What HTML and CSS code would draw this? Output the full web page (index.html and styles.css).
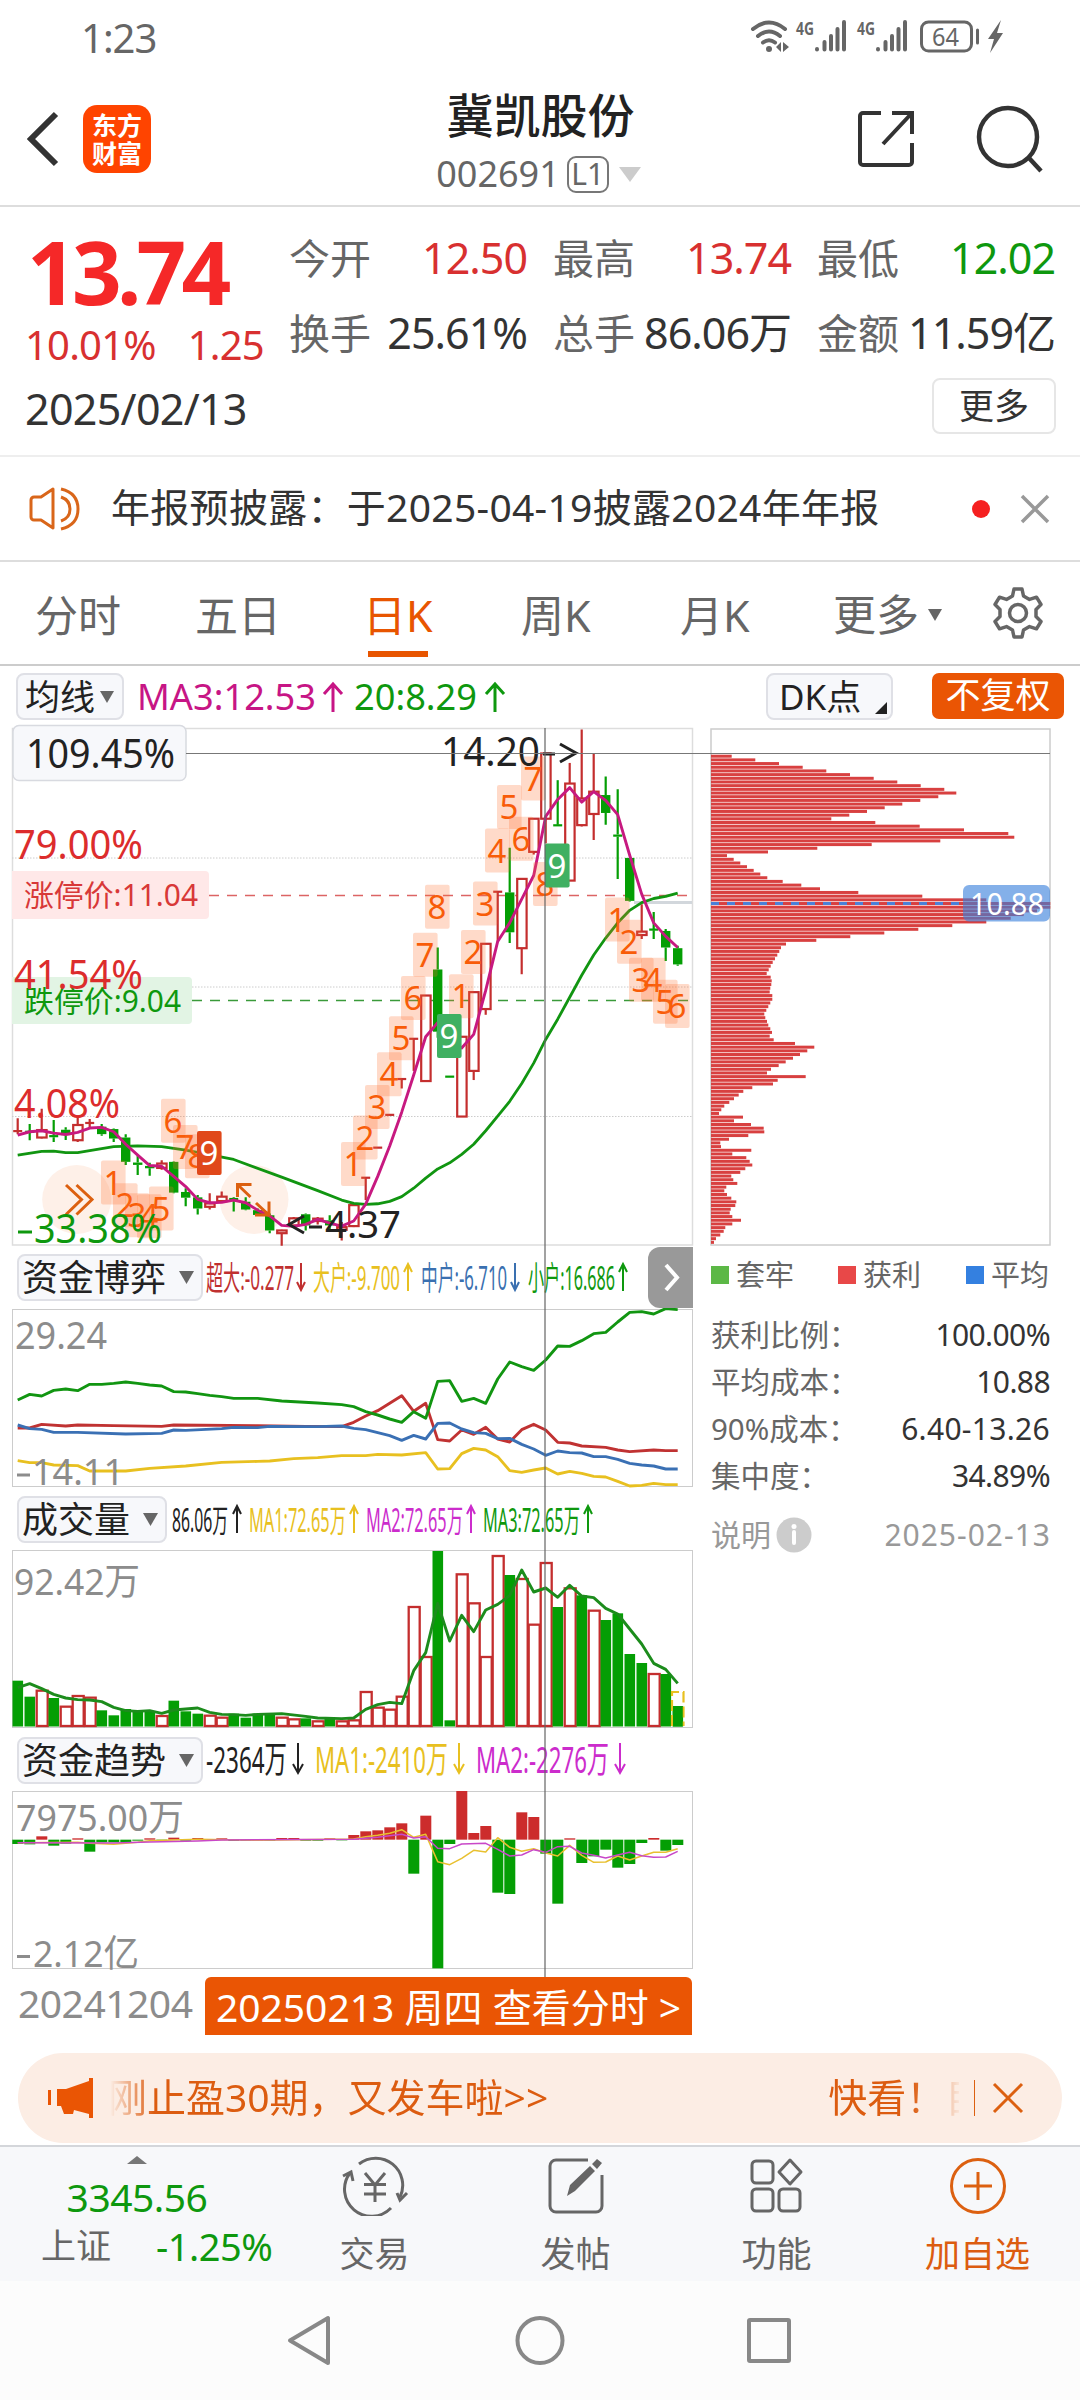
FILE: index.html
```html
<!DOCTYPE html>
<html lang="zh-CN">
<head>
<meta charset="utf-8">
<title>冀凯股份 002691</title>
<link rel="stylesheet" href="styles.css">
</head>
<body>
<div class="status">
  <span class="clock">1:23</span>
  <svg class="status-icons" width="256" height="40" viewBox="750 17 256 40">
    <g fill="none" stroke="#666" stroke-width="4" stroke-linecap="round">
      <path d="M753 29Q769 16 785 29M758 36Q769 27 780 36M763 42.500Q769 38 775 42.500"/>
      <path d="M817 49v.5M824.500 42v7.500M831 36v13.500M837.500 29v20.500M844 22v27.500"/>
      <path d="M878 49v.5M885.500 42v7.500M892 36v13.500M898.500 29v20.500M905 22v27.500"/>
    </g>
    <circle cx="769" cy="49" r="3" fill="#666"/>
    <path d="M776 47l5-5v10zM783 42l6 5-6 5z" fill="#666"/>
    <text x="796" y="35" font-size="18" font-weight="700" textLength="18" lengthAdjust="spacingAndGlyphs" fill="#666">4G</text>
    <text x="857" y="35" font-size="18" font-weight="700" textLength="18" lengthAdjust="spacingAndGlyphs" fill="#666">4G</text>
    <rect x="921.500" y="22" width="50" height="29" rx="7" fill="none" stroke="#666" stroke-width="3"/>
    <text x="932" y="45.500" font-size="25" textLength="27" lengthAdjust="spacingAndGlyphs" fill="#666">64</text>
    <path d="M977.500 30v13" stroke="#666" stroke-width="3" stroke-linecap="round"/>
    <path d="M1001 20l-13 19h6l-4 14 13-20h-6z" fill="#666"/>
  </svg>
</div>

<header class="header">
  <svg class="back" width="34" height="56" viewBox="0 0 34 56"><path d="M29 3L4 28l25 25" fill="none" stroke="#333" stroke-width="6"/></svg>
  <div class="logo"><span>东方</span><span>财富</span></div>
  <div class="titles">
    <div class="name">冀凯股份</div>
    <div class="code">002691<span class="level">L1</span><svg width="24" height="15" viewBox="0 0 24 15"><path d="M1 0h22L12 15z" fill="#ccc"/></svg></div>
  </div>
  <svg class="share" width="60" height="60" viewBox="0 0 60 60"><g fill="none" stroke="#333" stroke-width="4"><path d="M25 4H7a3 3 0 0 0-3 3v46a3 3 0 0 0 3 3h46a3 3 0 0 0 3-3V34"/><path d="M36 4h20v21M55 5L27 35"/></g></svg>
  <svg class="search" width="72" height="72" viewBox="0 0 72 72"><g fill="none" stroke="#333" stroke-width="4.500"><circle cx="33" cy="34" r="29"/><path d="M54 55l12 13"/></g></svg>
</header>

<section class="quote">
  <div class="price-block">
    <div class="price">13.74</div>
    <div class="change"><span>10.01%</span><span>1.25</span></div>
  </div>
  <div class="facts">
    <div><label>今开</label><b class="up">12.50</b></div>
    <div><label>最高</label><b class="up">13.74</b></div>
    <div><label>最低</label><b class="down">12.02</b></div>
    <div><label>换手</label><b>25.61%</b></div>
    <div><label>总手</label><b>86.06万</b></div>
    <div><label>金额</label><b>11.59亿</b></div>
  </div>
  <div class="date">2025/02/13</div>
  <div class="more-btn">更多</div>
</section>

<section class="notice">
  <svg width="52" height="46" viewBox="0 0 52 46"><g fill="none" stroke="#d9661a" stroke-width="3"><path d="M24 3L12 11H5a3 3 0 0 0-3 3v17a3 3 0 0 0 3 3h7l12 8zM32 11q9 3 9 12t-9 12M32 3q17 4 17 20T32 43" stroke-linejoin="round"/></g></svg>
  <span class="notice-text">年报预披露：于2025-04-19披露2024年年报</span>
  <i class="dot"></i>
  <svg class="close" width="32" height="32" viewBox="0 0 32 32"><path d="M3 3l26 26M29 3L3 29" stroke="#999" stroke-width="3.500"/></svg>
</section>

<nav class="tabs">
  <span class="t1">分时</span><span class="t2">五日</span><span class="t3 active">日K</span><span class="t4">周K</span><span class="t5">月K</span>
  <span class="t6">更多<svg width="14" height="12" viewBox="0 0 14 12"><path d="M0 0h14L7 12z" fill="#666"/></svg></span>
  <svg class="gear" width="54" height="54" viewBox="0 0 54 54"><g fill="none" stroke="#666" stroke-width="3.500" stroke-linejoin="round"><path d="M23 3h8l1.500 7 6 3.400 7-2.200 4.500 7.300-5 5v7l5 5-4.500 7.300-7-2.200-6 3.400L31 51h-8l-1.500-7-6-3.400-7 2.200L4 35.500l5-5v-7l-5-5 4.500-7.300 7 2.200 6-3.400z"/><circle cx="27" cy="27" r="8.500"/></g></svg>
</nav>

<section class="ma-row">
  <span class="pick">均线<svg width="14" height="12" viewBox="0 0 14 12"><path d="M0 0h14L7 12z" fill="#666"/></svg></span>
  <svg class="ma-text" width="380" height="46" viewBox="135 674 380 46">
    <text x="137" y="711" font-size="37" textLength="179" lengthAdjust="spacingAndGlyphs" fill="#c71585">MA3:12.53</text>
    <path d="M333 713v-28M324 695l9-10 9 10" fill="none" stroke="#c71585" stroke-width="3"/>
    <text x="354" y="711" font-size="37" textLength="123" lengthAdjust="spacingAndGlyphs" fill="#0e980e">20:8.29</text>
    <path d="M495 713v-28M486 695l9-10 9 10" fill="none" stroke="#0e980e" stroke-width="3"/>
  </svg>
  <span class="dk">DK点<svg width="12" height="12" viewBox="0 0 12 12"><path d="M12 0v12H0z" fill="#222"/></svg></span>
  <span class="adjust">不复权</span>
</section>

<main class="charts">
  <div class="left">
    <svg class="panel" width="700" height="530" viewBox="0 0 700 530">
      <rect x="12.500" y="8.500" width="680" height="516.500" fill="#fff" stroke="#ddd" stroke-width="1.500"/>
      <path d="M12 138h680M12 267h680M12 396.500h680" stroke="#ccc" stroke-dasharray="1.500 1.500"/>
      <circle cx="76.700" cy="479.500" r="34.500" fill="#fef0e8"/><circle cx="254" cy="479.500" r="34.500" fill="#fef0e8"/>
      <path d="M209 175.500h479" stroke="#dc6464" stroke-width="1.500" stroke-dasharray="10 8"/>
      <path d="M192 280.500h496" stroke="#3a9a3a" stroke-width="1.500" stroke-dasharray="10 8"/>
      <path d="M634 182.500h58" stroke="#d2d7dc" stroke-width="3"/>
      <g id="candles"></g>
      <g id="averages"></g>
      <path d="M66 465l15.500 14.500L66 494.500M76.500 465L92 479.500l-15.500 15M237.500 477v-12.500h14M238 465l12.500 12M269 481.500v13.500h-14M256 483l13 12" fill="none" stroke="#dc6010" stroke-width="3"/>
      <g id="tags"></g>
      <path d="M12 151h193a4 4 0 0 1 4 4v40a4 4 0 0 1-4 4H12z" fill="#ffe8e8"/>
      <path d="M12 257h176a4 4 0 0 1 4 4v39a4 4 0 0 1-4 4H12z" fill="#e2f4e4"/>
      <text x="24" y="186" font-size="30" textLength="174" lengthAdjust="spacingAndGlyphs" fill="#d83838">涨停价:11.04</text>
      <text x="24" y="292" font-size="30" textLength="157" lengthAdjust="spacingAndGlyphs" fill="#0e980e">跌停价:9.04</text>
      <g font-size="40">
        <text x="14" y="139" textLength="129" lengthAdjust="spacingAndGlyphs" fill="#dc2c2c">79.00%</text>
        <text x="14" y="269" textLength="129" lengthAdjust="spacingAndGlyphs" fill="#dc2c2c">41.54%</text>
        <text x="14" y="398" textLength="106" lengthAdjust="spacingAndGlyphs" fill="#dc2c2c">4.08%</text>
        <path d="M18 512h14" stroke="#0e980e" stroke-width="3"/>
        <text x="34" y="523" textLength="128" lengthAdjust="spacingAndGlyphs" fill="#0e980e">33.38%</text>
      </g>
      <text x="441" y="46" font-size="40" textLength="99" lengthAdjust="spacingAndGlyphs" fill="#222">14.20</text>
      <path d="M543 34h12M560 24l16 9-16 9" fill="none" stroke="#222" stroke-width="3"/>
      <path d="M304 496l-15 8.500 15 8.500M309 507h13" fill="none" stroke="#222" stroke-width="3"/>
      <text x="325" y="518" font-size="39" textLength="76" lengthAdjust="spacingAndGlyphs" fill="#222">4.37</text>
      <rect x="13" y="5.500" width="173" height="55" rx="6" fill="#f7f8fb" stroke="#d8dae0" stroke-width="1.500"/>
      <text x="26" y="48" font-size="40" textLength="149" lengthAdjust="spacingAndGlyphs" fill="#222">109.45%</text>
    </svg>

    <div class="ind r1">
      <span class="pick wide">资金博弈<svg width="15" height="13" viewBox="0 0 15 13"><path d="M0 0h15L7.500 13z" fill="#666"/></svg></span>
      <svg width="430" height="46" viewBox="205 1254 430 46" font-size="33">
        <text x="206" y="1290" textLength="88" lengthAdjust="spacingAndGlyphs" fill="#c03030">超大:-0.277</text>
        <text x="313" y="1290" textLength="87" lengthAdjust="spacingAndGlyphs" fill="#e8c020">大户:-9.700</text>
        <text x="421" y="1290" textLength="86" lengthAdjust="spacingAndGlyphs" fill="#3a70b0">中户:-6.710</text>
        <text x="528" y="1290" textLength="87" lengthAdjust="spacingAndGlyphs" fill="#0e980e">小户:16.686</text>
        <path d="M301 1263v27M297 1282l4 8 4-8" class="arr" stroke="#c03030"/>
        <path d="M408 1291v-27M404 1272l4-8 4 8" class="arr" stroke="#e8c020"/>
        <path d="M515 1263v27M511 1282l4 8 4-8" class="arr" stroke="#3a70b0"/>
        <path d="M623 1291v-27M619 1272l4-8 4 8" class="arr" stroke="#0e980e"/>
      </svg>
    </div>
    <svg class="panel" width="700" height="178" viewBox="0 0 700 178">
      <rect x="12.500" y=".5" width="680" height="177" fill="none" stroke="#ccc"/>
      <g id="funds"></g>
      <text x="15" y="40" font-size="38" textLength="92" lengthAdjust="spacingAndGlyphs" fill="#8c8c8c">29.24</text>
      <path d="M17 166h13" stroke="#8c8c8c" stroke-width="3"/>
      <text x="32" y="176" font-size="37" textLength="92" lengthAdjust="spacingAndGlyphs" fill="#8c8c8c">14.11</text>
    </svg>

    <div class="ind r2">
      <span class="pick wide">成交量<svg width="15" height="13" viewBox="0 0 15 13"><path d="M0 0h15L7.500 13z" fill="#666"/></svg></span>
      <svg width="430" height="46" viewBox="171 1496 430 46" font-size="32">
        <text x="172" y="1532" textLength="56" lengthAdjust="spacingAndGlyphs" fill="#222">86.06万</text>
        <text x="249" y="1532" textLength="97" lengthAdjust="spacingAndGlyphs" fill="#e8c020">MA1:72.65万</text>
        <text x="366" y="1532" textLength="97" lengthAdjust="spacingAndGlyphs" fill="#cc2ccc">MA2:72.65万</text>
        <text x="483" y="1532" textLength="97" lengthAdjust="spacingAndGlyphs" fill="#0e980e">MA3:72.65万</text>
        <path d="M237 1533v-27M233 1514l4-8 4 8" class="arr" stroke="#222"/>
        <path d="M354 1533v-27M350 1514l4-8 4 8" class="arr" stroke="#e8c020"/>
        <path d="M471 1533v-27M467 1514l4-8 4 8" class="arr" stroke="#cc2ccc"/>
        <path d="M588 1533v-27M584 1514l4-8 4 8" class="arr" stroke="#0e980e"/>
      </svg>
    </div>
    <svg class="panel" width="700" height="178" viewBox="0 0 700 178">
      <rect x="12.500" y=".5" width="680" height="177" fill="none" stroke="#ccc"/>
      <g id="volume"></g>
      <text x="14" y="45" font-size="37" textLength="126" lengthAdjust="spacingAndGlyphs" fill="#8c8c8c">92.42万</text>
    </svg>

    <div class="ind r3">
      <span class="pick wide">资金趋势<svg width="15" height="13" viewBox="0 0 15 13"><path d="M0 0h15L7.500 13z" fill="#666"/></svg></span>
      <svg width="430" height="46" viewBox="205 1737 430 46" font-size="37">
        <text x="206" y="1773" textLength="81" lengthAdjust="spacingAndGlyphs" fill="#222">-2364万</text>
        <text x="315" y="1773" textLength="133" lengthAdjust="spacingAndGlyphs" fill="#e8c020">MA1:-2410万</text>
        <text x="476" y="1773" textLength="133" lengthAdjust="spacingAndGlyphs" fill="#cc2ccc">MA2:-2276万</text>
        <path d="M298 1743v30M293 1764l5 9 5-9" class="arr" stroke="#222"/>
        <path d="M459 1743v30M454 1764l5 9 5-9" class="arr" stroke="#e8c020"/>
        <path d="M620 1743v30M615 1764l5 9 5-9" class="arr" stroke="#cc2ccc"/>
      </svg>
    </div>
    <svg class="panel" width="700" height="178" viewBox="0 0 700 178">
      <rect x="12.500" y=".5" width="680" height="177" fill="none" stroke="#ccc"/>
      <g id="trend"></g>
      <text x="16" y="40" font-size="37" textLength="168" lengthAdjust="spacingAndGlyphs" fill="#8c8c8c">7975.00万</text>
      <path d="M17 165.500h13" stroke="#8c8c8c" stroke-width="3"/>
      <text x="33" y="176" font-size="37" textLength="106" lengthAdjust="spacingAndGlyphs" fill="#8c8c8c">2.12亿</text>
    </svg>

    <div class="dates"><span class="from">20241204</span><span class="goto">20250213 周四 查看分时 &gt;</span></div>
    <div class="next"><svg width="44" height="61" viewBox="0 0 44 61"><path d="M18 18l11 12.500L18 43" fill="none" stroke="#fff" stroke-width="4"/></svg></div>
  </div>

  <aside class="right">
    <svg class="panel" width="370" height="530" viewBox="700 0 370 530">
      <rect x="711" y="9" width="339" height="516" fill="none" stroke="#ccc" stroke-width="1.500"/>
      <g id="chips"></g>
      <path d="M711 183.600h252" stroke="#4a80d8" stroke-width="3" stroke-dasharray="8 8"/>
      <rect x="963" y="165" width="87" height="36.500" rx="6" fill="#3880dc" fill-opacity=".62"/>
      <text x="970" y="195" font-size="31" textLength="74" lengthAdjust="spacingAndGlyphs" fill="#fff">10.88</text>
    </svg>
    <div class="legend"><span class="c1">套牢</span><span class="c2">获利</span><span class="c3">平均</span></div>
    <dl class="stats">
      <dt>获利比例：</dt><dd>100.00%</dd>
      <dt>平均成本：</dt><dd>10.88</dd>
      <dt>90%成本：</dt><dd class="range">6.40-13.26</dd>
      <dt>集中度：</dt><dd>34.89%</dd>
    </dl>
    <div class="explain"><span>说明</span><svg width="36" height="36" viewBox="0 0 36 36"><circle cx="18" cy="18" r="17.500" fill="#ccc"/><path d="M18 15v11" stroke="#fff" stroke-width="4" stroke-linecap="round"/><circle cx="18" cy="9.500" r="2.500" fill="#fff"/></svg><time>2025-02-13</time></div>
  </aside>
  <div class="cross-h"></div>
  <div class="cross-v"></div>
</main>

<section class="ticker">
  <svg width="46" height="42" viewBox="0 0 46 42"><path d="M1 13v15" stroke="#ea5504" stroke-width="4"/><path d="M9 12h9L41 4V1h4v40h-4v-4l-15-4-1 4h-9l-3-8H9z" fill="#ea5504"/></svg>
  <div class="marquee"><span>刚止盈30期，又发车啦&gt;&gt;</span><span class="second">快看！</span><span class="third">目</span></div>
  <i></i>
  <svg width="34" height="34" viewBox="0 0 34 34"><path d="M3 3l28 28M31 3L3 31" stroke="#dc6010" stroke-width="3"/></svg>
</section>

<footer class="toolbar">
  <div class="index">
    <svg width="20" height="8" viewBox="0 0 20 8"><path d="M0 8h20L10 0z" fill="#777"/></svg>
    <div class="level-now">3345.56</div>
    <div class="index-row"><span>上证</span><b>-1.25%</b></div>
  </div>
  <div class="tool">
    <svg width="68" height="60" viewBox="0 0 68 60"><g fill="none" stroke="#666" stroke-width="3"><path d="M18 8A27 27 0 0 1 59 41M50 52A27 27 0 0 1 9 17"/><path d="M2 20l8-4 2 9M66 37l-7 7-3-7"/><path d="M24 17l10 12 10-12M34 29v17M23 28.500h22M23 38h22"/></g></svg>
    <span>交易</span>
  </div>
  <div class="tool">
    <svg width="60" height="60" viewBox="0 0 60 60"><path d="M42 4H10a6 6 0 0 0-6 6v40a6 6 0 0 0 6 6h40a6 6 0 0 0 6-6V19" fill="none" stroke="#666" stroke-width="3"/><path d="M21 40l3-11 20-19 5 5-20 20z M46 8l5-5 5 4-5 6z" fill="#666"/></svg>
    <span>发帖</span>
  </div>
  <div class="tool">
    <svg width="60" height="60" viewBox="0 0 60 60"><g fill="none" stroke="#666" stroke-width="3" stroke-linejoin="round"><rect x="5" y="5" width="21" height="22" rx="4"/><rect x="5" y="33" width="21" height="22" rx="4"/><rect x="32" y="33" width="21" height="22" rx="4"/><path d="M43 4l11 12-11 12-11-12z"/></g></svg>
    <span>功能</span>
  </div>
  <div class="tool add">
    <svg width="60" height="60" viewBox="0 0 60 60"><g fill="none" stroke="#dc6010" stroke-width="3"><circle cx="30" cy="30" r="26.500"/><path d="M30 16v28M16 30h28"/></g></svg>
    <span>加自选</span>
  </div>
</footer>

<div class="sysnav">
  <svg width="1080" height="118" viewBox="0 0 1080 118"><g fill="none" stroke="#888" stroke-width="4" stroke-linejoin="round"><path d="M328 37v45L290 59.500z"/><circle cx="540" cy="59.500" r="22.500"/><rect x="749" y="39" width="40" height="41" rx="1"/></g></svg>
</div>
<script src="charts.js"></script>
</body>
</html>
```
FILE: styles.css
```css
* { box-sizing: border-box; }
body {
  margin: 0;
  width: 1080px;
  height: 2400px;
  overflow: hidden;
  background: #fff;
  color: #333;
  font-family: "Noto Sans", "Noto Sans CJK SC", sans-serif;
  line-height: 1;
}
svg { display: block; flex: none; }
b { font-weight: 400; }
.panel { overflow: visible; }

.status { height: 75px; display: flex; justify-content: space-between; padding: 17px 74px 0 81px; }
.clock { font-size: 40px; line-height: 42px; color: #666; letter-spacing: -1px; }

.header { height: 132px; display: flex; align-items: flex-start; border-bottom: 2px solid #ddd; }
.back { margin: 36px 22px 0 27px; }
.logo {
  width: 68px; height: 68px; margin-top: 30px; padding-top: 6px; border-radius: 14px; background: #ff4400;
  display: flex; flex-direction: column; align-items: center; color: #fff; font-size: 25px; font-weight: 700; line-height: 28px;
}
.titles { flex: 1; margin-top: 16px; padding-left: 74px; display: flex; flex-direction: column; align-items: center; }
.name { font-size: 47px; line-height: 48px; font-weight: 500; color: #222; }
.code { display: flex; align-items: center; height: 36px; margin: 17px 3px 0 0; font-size: 36px; color: #666; }
.level { width: 42px; height: 37px; margin: 0 9px 0 7px; border: 2px solid #777; border-radius: 9px; font-size: 30px; line-height: 31px; text-align: center; }
.share { margin: 34px 0 0; }
.search { margin: 28px 33px 0 59px; }

.quote { height: 250px; padding: 23px 25px 0; display: grid; grid-template-columns: 264px 1fr; grid-template-rows: 140px 56px; row-gap: 8px; border-bottom: 2px solid #eee; }
.price { font-size: 87px; line-height: 82px; padding-left: 2px; font-weight: 700; letter-spacing: -4.800px; color: #f52828; }
.change { display: flex; gap: 32px; margin-top: 11px; font-size: 40px; line-height: 44px; letter-spacing: -.8px; color: #d83030; }
.facts { display: grid; grid-template-columns: repeat(3, 238px); column-gap: 26px; grid-auto-rows: 75px; margin-top: 1px; }
.facts div { display: flex; justify-content: space-between; line-height: 54px; white-space: nowrap; }
.facts label { font-size: 41px; color: #666; }
.facts b { font-size: 43px; letter-spacing: -1px; }
.facts .up { color: #d83030; }
.facts .down { color: #0e980e; }
.date { font-size: 43px; line-height: 62px; letter-spacing: -.7px; }
.more-btn { justify-self: end; width: 124px; height: 56px; margin-right: -1px; border: 2px solid #e6e6e6; border-radius: 8px; text-align: center; font-size: 35px; line-height: 52px; }

.notice { height: 105px; display: flex; align-items: center; padding: 0 29px; border-bottom: 2px solid #ddd; }
.notice-text { margin: 0 0 4px 30px; font-size: 39px; letter-spacing: .3px; white-space: nowrap; flex: 1; }
.dot { width: 18px; height: 18px; border-radius: 50%; background: #f52020; margin-right: 29px; }

.tabs { height: 104px; display: grid; grid-template-columns: 160px 165px 161px 159px 149px 168px 1fr; padding-left: 35px; align-items: center; border-bottom: 2px solid #ccc; font-size: 43px; line-height: 100px; color: #666; }
.tabs span { padding-top: 4px; height: 102px; }
.tabs .t3 { padding-left: 3px; }
.tabs .active { color: #e85500; background: linear-gradient(#e85500, #e85500) 8px 89px / 60px 6px no-repeat; }
.tabs .t6 { display: flex; align-items: center; gap: 9px; padding-left: 4px; }
.gear { margin: 0 0 0 -6px; }

.ma-row { height: 54px; display: flex; align-items: flex-start; padding: 7px 16px 0; }
.pick, .dk { height: 47px; border: 2px solid #dfe0e6; border-radius: 8px; background: #f7f8fb; color: #222; font-size: 35px; line-height: 43px; display: flex; align-items: center; white-space: nowrap; }
.pick { width: 108px; padding-left: 7px; gap: 5px; }
.ma-text { margin-left: 11px; overflow: visible; }
.dk { width: 127px; margin-left: auto; padding-left: 11px; position: relative; }
.dk svg { position: absolute; right: 4px; bottom: 4px; }
.adjust { width: 132px; height: 46px; margin-left: 39px; border-radius: 7px; background: #ea5504; color: #fff; font-size: 35px; line-height: 44px; text-align: center; }

.charts { position: relative; display: grid; grid-template-columns: 700px 1fr; height: 1333px; }
.left { position: relative; }
.ind { display: flex; align-items: flex-start; padding-left: 17px; }
.ind svg { overflow: visible; }
.ind > svg { margin-left: 2px; }
.r1 { height: 59px; padding-top: 4px; }
.r2, .r3 { height: 63px; padding-top: 9px; }
.wide { width: auto; padding: 0 7px 0 3px; gap: 13px; font-size: 36px; }
.arr { fill: none; stroke-width: 2; }
.r2 > svg { margin-left: 4px; }
.dates { display: flex; padding: 8px 0 0 18px; color: #8c8c8c; }
.from { width: 187px; font-size: 39px; line-height: 52px; letter-spacing: -.5px; }
.goto { width: 487px; height: 58px; border-radius: 6px 6px 0 0; background: #ea5504; color: #fff; font-size: 39px; line-height: 60px; text-align: center; white-space: nowrap; }
.next { position: absolute; left: 648px; top: 527px; width: 45px; height: 61px; border-radius: 12px 0 0 12px; background: #999; }
.cross-h { position: absolute; left: 186px; top: 33px; width: 864px; height: 1px; background: #777; }
.cross-v { position: absolute; left: 544px; top: 8px; width: 2px; height: 1249px; background: rgba(100, 100, 100, .6); }

.right { color: #666; font-size: 30px; }
.legend { display: grid; grid-template-columns: 127px 128px 1fr; padding-left: 11px; line-height: 50px; font-size: 29px; }
.legend span { display: flex; align-items: center; gap: 7px; }
.legend span::before { content: ""; width: 18px; height: 18px; background: currentColor; }
.legend .c1::before { background: #5cb846; }
.legend .c2::before { background: #e84848; }
.legend .c3::before { background: #3480e0; }
.stats { margin: 11px 30px 0 11px; display: grid; grid-template-columns: auto auto; line-height: 47px; }
.stats dt { font-size: 29.500px; }
.stats dd { margin: 0; text-align: right; color: #333; letter-spacing: -.6px; }
.stats .range { letter-spacing: .3px; }
.explain { display: flex; align-items: center; padding: 0 29px 0 11px; margin-top: 18px; color: #999; }
.explain svg { margin-left: 5px; }
.explain time { margin-left: auto; letter-spacing: 1px; }

.ticker { height: 90px; margin: 0 18px; padding: 0 37px 0 30px; border-radius: 45px; background: #fcede4; display: flex; align-items: center; color: #dc5c10; }
.marquee { width: 849px; height: 60px; margin-left: 16px; overflow: hidden; white-space: nowrap; display: flex; font-size: 39px; line-height: 58px; -webkit-mask-image: linear-gradient(90deg, transparent 0, #000 44px, #000 802px, transparent 852px); }
.marquee .second { margin-left: 280px; }
.marquee span:first-child { margin-left: -2px; }
.ticker i { width: 1px; height: 36px; background: #dc6010; margin: 0 16px 0 15px; }

.toolbar { height: 136px; margin-top: 2px; border-top: 2px solid #d4d6da; background: #f7f8fa; display: grid; grid-template-columns: 274px repeat(4, 201px); }
.index { display: flex; flex-direction: column; align-items: center; padding-top: 9px; color: #0e980e; }
.level-now { font-size: 39px; line-height: 40px; margin-top: 13px; letter-spacing: -.5px; }
.index-row { display: flex; gap: 45px; margin: 8px 0 0 38px; font-size: 35px; line-height: 42px; align-self: flex-start; padding-left: 3px; }
.index-row span { color: #666; }
.index-row b { font-size: 38px; letter-spacing: -.5px; }
.tool { display: flex; flex-direction: column; align-items: center; padding-top: 9px; color: #666; font-size: 35px; }
.tool span { margin-top: 20px; }
.tool.add { color: #dc5c10; }
.sysnav { background: #fcfcfc; height: 119px; }
```
FILE: charts.js
```js
// Bar i of every left-hand panel is centred on the same x.
const X = i => 17.7 + 12 * i;
const put = (id, html) => { document.getElementById(id).innerHTML = html; };
const line = (pts, y, color, w) =>
  `<polyline fill="none" stroke="${color}" stroke-width="${w}" stroke-linejoin="round" points="${pts.map((v, i) => v == null ? '' : X(i) + ',' + y(v)).join(' ')}"/>`;
const sparse = obj => { const a = []; for (const k in obj) a[k] = obj[k]; return Array.from(a, v => v === undefined ? null : v); };
const RED = '#c42e2e', GREEN = '#049e04';

// Daily candles: colour, body top, body bottom, high, low.
const P = v => +(v / 2.958).toFixed(2);
const candles = [
  ['r',1214,1218,1178,1225],['g',1216,1220,1195,1243],['r',1213,1235,1150,1238],['g',1228,1234,1183,1248],
  ['g',1212,1228,1205,1242],['r',1198,1243,1170,1248],['r',1190,1194,1180,1210],['g',1203,1225,1195,1230],
  ['g',1210,1238,1208,1248],['g',1235,1307,1225,1316],['g',1309,1316,1290,1346],['g',1319,1326,1310,1348],
  ['r',1312,1325,1302,1330],['g',1307,1398,1305,1400],['g',1396,1413,1385,1438],['g',1412,1445,1405,1463],
  ['r',1430,1440,1400,1448],['r',1410,1423,1395,1428],['g',1414,1420,1412,1454],['g',1425,1448,1412,1450],
  ['g',1450,1464,1445,1466],['g',1465,1510,1460,1518],['r',1510,1518,1508,1555],['r',1474,1495,1470,1500],
  ['g',1462,1495,1460,1510],['r',1475,1482,1470,1492],['g',1480,1495,1465,1508],['r',1500,1508,1485,1540],
  ['r',1435,1497,1435,1500],['r',1353,1355,1353,1420],['r',1264,1266,1264,1266],['r',1167,1169,1167,1169],
  ['r',1061,1063,1061,1090],['r',942,944,942,1038],['r',815,1068,815,1068],['g',738,922,673,940],
  ['g',1053,1057,1053,1057],['r',937,1173,937,1173],['r',805,1038,805,1065],['r',662,855,662,872],
  ['r',507,509,507,655],['g',510,628,378,660],['r',470,675,470,752],['r',292,390,292,398],
  ['r',99,292,99,365],['g',310,313,178,313],['r',188,475,127,475],['r',232,311,28,315],
  ['r',212,278,100,355],['g',222,275,167,310],['g',339,345,205,470],['g',408,535,408,537],
  ['r',626,636,545,648],['g',618,622,568,648],['g',624,673,618,713],['g',675,723,668,727]
];
put('candles', candles.map(([c, t, b, h, l], i) => {
  const x = X(i), col = c === 'r' ? RED : GREEN;
  const wick = `<path d="M${x} ${P(h)}V${P(t)}M${x} ${P(b)}V${P(l)}" stroke="${col}" stroke-width="2.2"/>`;
  const body = b - t < 7
    ? `<path d="M${x - 4.5} ${P((t + b) / 2)}h9" stroke="${col}" stroke-width="2.2"/>`
    : c === 'r'
      ? `<rect x="${x - 4.5}" y="${P(t)}" width="9.4" height="${P(b - t)}" fill="#fff" stroke="${col}" stroke-width="2.2"/>`
      : `<rect x="${x - 4.7}" y="${P(t)}" width="9.4" height="${P(b - t)}" fill="${col}"/>`;
  return wick + body;
}).join(''));

const ma3 = [1228,1218,1215,1222,1226,1220,1207,1205,1218,1255,1287,1318,1320,1350,1380,1418,1428,1427,1420,1428,1450,1467,1495,1498,1492,1477,1488,1497,1482,1432,1350,1260,1160,1050,937,895,945,970,930,800,655,600,530,460,285,235,200,243,212,238,280,400,515,600,640,673];
const ma20 = sparse({0:1287,2:1276,3:1275,4:1280,5:1280,8:1262,10:1260,12:1262,14:1272,18:1300,22:1352,25:1392,27:1420,28:1430,29:1433,30:1431,31:1424,32:1410,33:1385,34:1355,35:1328,36:1310,37:1285,38:1255,39:1215,40:1172,41:1128,42:1075,43:1015,44:945,45:885,46:820,47:755,48:695,49:645,50:600,51:563,52:540,53:528,54:522,55:512});
put('averages', line(ma20, P, '#119511', 2.8) + line(ma3, P, '#c71980', 2.9));

// Nine-turn counters: x, top, digit and an optional solid fill.
const tags = [
  [161,1120,6],[173,1198,7],[185,1225,8],[101,1303,1],[113,1370,2],[125,1400,3],[137,1403,4],[149,1380,5],
  [341,1248,1],[353,1170,2],[365,1080,3],[377,983,4],[389,876,5],[401,757,6],[413,629,7],[425,487,8],
  [449,752,1],[461,621,2],[473,478,3],[485,321,4],[497,192,5],[509,286,6],[521,108,7],[533,420,8],
  [605,525,1],[617,591,2],[629,703,3],[641,703,4],[653,768,5],[665,781,6],
  [197,1216,9,'#e0481a'],[437,870,9,'#40b062'],[545,365,9,'#40b062']
];
put('tags', tags.map(([x, y, n, f]) =>
  `<rect x="${x}" y="${P(y)}" width="24.6" height="44" rx="2" fill="${f || '#ff7030'}" fill-opacity="${f ? 1 : .26}"/>` +
  `<text x="${x + 12}" y="${P(y + 101)}" font-size="33" text-anchor="middle" fill="${f ? '#fff' : '#f85c08'}">${n}</text>`).join(''));

// Money flow by investor size.
const F = v => +((v - 207) / 3).toFixed(2);
const retail = sparse({0:480,1:463,2:468,3:451,4:447,5:452,6:433,7:433,8:430,9:426,10:430,11:435,12:438,13:455,14:456,15:461,16:466,17:470,18:475,20:475,22:483,25:489,27:494,28:500,29:515,30:525,31:537,32:547,33:515,34:535,35:424,36:422,37:484,38:475,39:490,40:417,41:366,42:380,43:391,44:360,45:318,46:319,47:302,48:281,49:277,50:246,51:217,52:215,53:222,54:206,55:209});
const huge = sparse({0:564,1:564,2:553,4:558,5:555,8:557,12:559,13:555,20:557,24:559,27:560,28:547,29:528,30:512,31:490,32:467,33:514,34:490,35:599,36:603,37:570,38:583,39:562,40:597,41:606,42:569,43:553,44:570,45:607,46:609,47:618,49:622,50:630,51:635,53:630,54:632,55:632});
const mid = sparse({0:555,1:566,2:568,3:577,5:577,9:582,12:580,13:570,14:571,17:566,18:562,20:563,21:559,25:560,27:558,28:565,29:569,31:587,32:601,33:586,34:597,35:550,36:549,37:567,38:578,39:580,40:596,41:595,42:613,43:627,44:646,45:633,46:638,47:639,48:650,49:650,50:658,51:670,52:675,53:678,54:687,55:687});
const large = sparse({0:662,1:668,2:668,3:675,5:677,6:693,9:693,11:685,14:678,17:667,20:664,21:663,23:656,25:653,27:647,29:647,30:643,32:645,34:638,35:687,36:686,37:641,38:625,39:630,40:650,41:692,42:697,43:690,44:684,45:702,46:694,47:700,48:709,49:711,50:724,51:738,52:736,53:730,54:734,55:734});
put('funds', line(huge, F, '#c03232', 2.9) + line(large, F, '#e8c020', 2.9) + line(mid, F, '#3a70b4', 2.9) + line(retail, F, '#119511', 2.9));

// Volume: colour and bar top.
const V = v => +((v - 30) / 3).toFixed(2);
const vols = 'g422 g470 r449 g474 r497 r465 r470 g511 g526 g507 g515 g516 r525 g482 g514 g521 r524 r530 g521 g533 g521 g522 r530 r535 g535 r541 g537 r541 r538 r453 r500 r506 r467 r198 r348 g33 g541 r100 r187 r348 r45 g105 r114 r251 r66 g201 r142 g166 r209 g240 g220 g342 g369 r399 g402 g498'.split(' ');
const volMa = sparse({0:443,1:431,2:446,3:463,4:474,5:479,6:480,7:485,8:502,9:512,10:514,11:512,12:520,13:510,14:507,15:504,16:517,17:523,18:524,19:526,20:523,22:521,24:529,25:534,27:536,28:534,29:508,30:494,31:487,32:491,33:392,34:338,35:190,36:303,37:226,38:275,39:210,40:193,41:167,42:90,43:156,44:144,45:172,46:136,47:168,48:173,49:205,50:222,51:267,52:312,53:370,54:388,55:430});
put('volume', vols.map((s, i) => {
  const t = V(+s.slice(1)), x = X(i);
  return s[0] === 'g'
    ? `<rect x="${x - 5.2}" y="${t}" width="10.6" height="${176.5 - t}" fill="${GREEN}"/>`
    : `<rect x="${x - 5}" y="${t + 1}" width="11" height="${175 - t}" fill="#fff" stroke="${RED}" stroke-width="2.3"/>`;
}).join('') + `<path d="M${X(55) - 5.7} 176V142h11.500V176" fill="none" stroke="#e8c020" stroke-width="2.2" stroke-dasharray="11 4"/>` +
  `<rect x="${X(55) - 4.7}" y="156" width="9.6" height="20.5" fill="${GREEN}"/>` + line(volMa, V, '#1c8c1c', 2.9));

// Net capital flow around the zero line.
const T = v => +((v - 33) / 3).toFixed(2);
const flow = [192,193,169,197,191,175,215,187,187,186,182,175,182,173,182,174,181,175,183,182,182,182,174,174,182,182,175,181,165,154,151,142,130,281,107,565,192,33,159,138,338,342,97,111,221,371,175,249,229,209,263,252,189,174,212,195];
const flowMa1 = sparse({0:188,5:187,6:190,8:193,10:187,11:182,15:178,20:181,28:177,29:170,30:166,31:160,32:149,33:172,34:163,35:245,36:254,37:235,38:211,39:216,40:173,41:202,42:214,43:206,44:219,45:228,46:196,47:226,48:247,49:246,50:228,51:240,52:228,53:217,54:217,55:206});
const flowMa2 = sparse({0:188,8:189,11:186,15:183,17:180,28:178,30:172,32:163,33:174,34:170,35:205,36:206,37:192,39:190,40:208,41:228,42:225,43:209,44:217,45:200,46:199,47:219,48:226,49:234,50:225,51:217,52:227,53:232,54:231,55:214});
put('trend', flow.map((v, i) =>
  `<rect x="${X(i) - 5.4}" y="${T(Math.min(v, 179))}" width="11" height="${(Math.abs(v - 179) / 3).toFixed(2)}" fill="${v < 179 ? '#cc2c2c' : GREEN}"/>`).join('') +
  line(flowMa1, T, '#e8c030', 1.5) + line(flowMa2, T, '#c848c8', 1.5));

// Chip distribution, top price to bottom price.
const chips = [124,195,266,337,408,479,550,621,691,762,798,744,690,636,583,530,477,423,555,688,821,954,972,750,544,381,233,110,130,150,170,190,210,231,277,333,389,504,696,888,1080,1080,1040,1000,961,888,786,684,582,480,378,287,272,267,261,254,247,241,235,229,241,244,243,240,238,246,246,240,234,228,222,225,230,234,240,245,238,250,314,372,351,329,308,286,265,242,230,346,262,248,186,159,145,131,117,102,93,86,158,131,182,220,222,174,116,90,92,183,126,168,178,186,165,150,123,129,141,108,102,110,123,138,135,121,118,126,152,126,105,100,90,77,71];
put('chips', chips.map((e, i) =>
  `<rect x="711" y="${(34.7 + i * 3.683).toFixed(2)}" width="${((e - 62) / 3).toFixed(1)}" height="3" fill="#d84040"/>`).join(''));
```
